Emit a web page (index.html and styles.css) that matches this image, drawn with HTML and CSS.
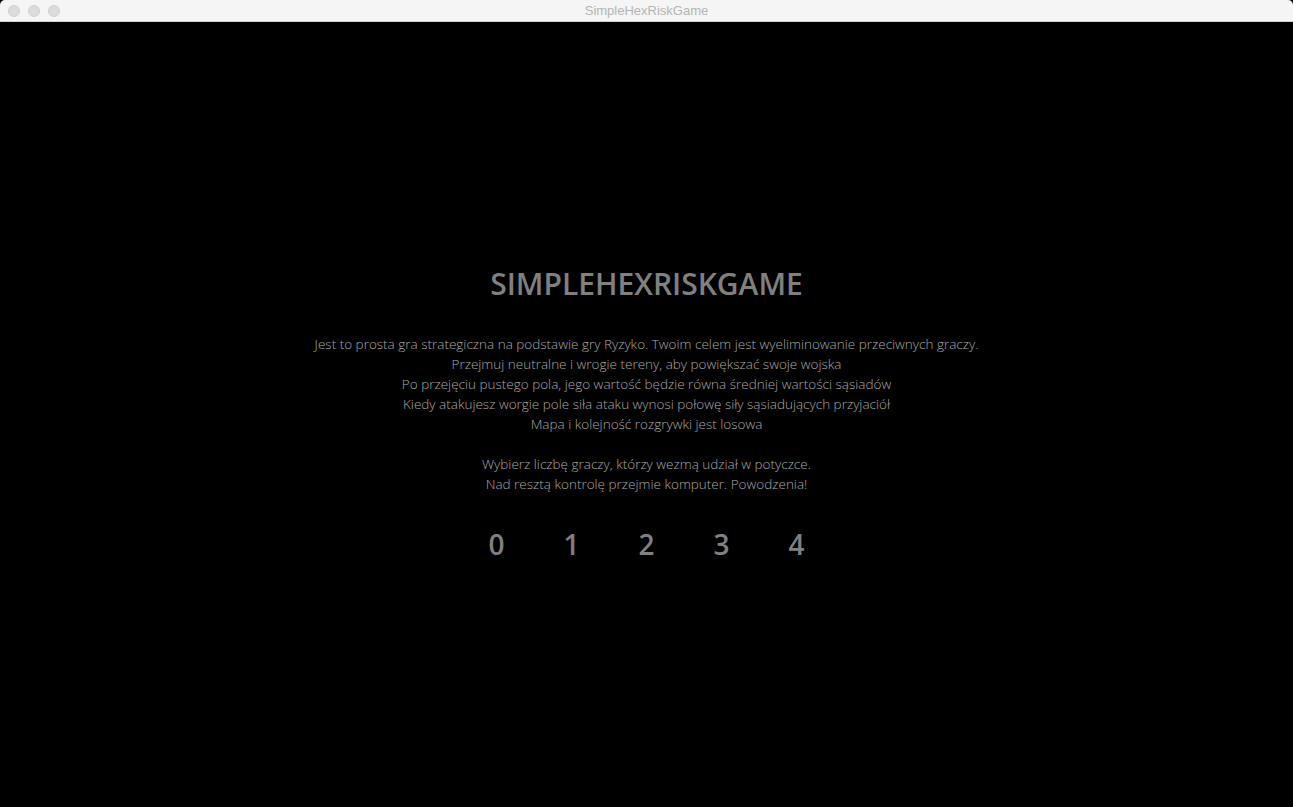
FILE: index.html
```html
<!DOCTYPE html>
<html lang="pl">
<head>
<meta charset="utf-8">
<title>SimpleHexRiskGame</title>
<link rel="stylesheet" href="styles.css">
</head>
<body>
<div class="window">
  <header class="titlebar">
    <div class="lights">
      <span class="light"></span>
      <span class="light"></span>
      <span class="light"></span>
    </div>
    <div class="wtitle">SimpleHexRiskGame</div>
  </header>
  <main class="screen">
    <h1 class="title">SIMPLEHEXRISKGAME</h1>
    <div class="desc">
      <p>Jest to prosta gra strategiczna na podstawie gry Ryzyko. Twoim celem jest wyeliminowanie przeciwnych graczy.</p>
      <p>Przejmuj neutralne i wrogie tereny, aby powiększać swoje wojska</p>
      <p>Po przejęciu pustego pola, jego wartość będzie równa średniej wartości sąsiadów</p>
      <p>Kiedy atakujesz worgie pole siła ataku wynosi połowę siły sąsiadujących przyjaciół</p>
      <p>Mapa i kolejność rozgrywki jest losowa</p>
      <p class="blank">&nbsp;</p>
      <p>Wybierz liczbę graczy, którzy wezmą udział w potyczce.</p>
      <p>Nad resztą kontrolę przejmie komputer. Powodzenia!</p>
    </div>
    <div class="choices">
      <span class="choice">0</span>
      <span class="choice">1</span>
      <span class="choice">2</span>
      <span class="choice">3</span>
      <span class="choice">4</span>
    </div>
  </main>
</div>
</body>
</html>
```

FILE: styles.css
```css
* { box-sizing: border-box; }
html, body { margin: 0; padding: 0; height: 100%; }
body { background: #000; }
.window {
  width: 1293px;
  height: 807px;
  display: flex;
  flex-direction: column;
  background: #000;
}
.titlebar {
  height: 22px;
  flex: 0 0 22px;
  background: #f5f5f5;
  border-bottom: 1px solid #d1d1d1;
  border-radius: 5px 5px 0 0;
  display: flex;
  align-items: center;
  position: relative;
}
.lights {
  display: flex;
  gap: 8px;
  padding-left: 8px;
  position: relative;
  z-index: 1;
}
.light {
  width: 12px;
  height: 12px;
  border-radius: 50%;
  background: #dcdcdc;
  border: 1px solid #d0d0d0;
}
.wtitle {
  position: absolute;
  left: 0;
  right: 0;
  top: 0;
  height: 21px;
  line-height: 22px;
  text-align: center;
  font-family: "Liberation Sans", Arial, sans-serif;
  font-size: 13px;
  color: #b4b4b4;
}
.screen {
  flex: 1;
  display: flex;
  flex-direction: column;
  align-items: center;
  padding-top: 245px;
  font-family: "Open Sans", "Noto Sans", sans-serif;
}
.title {
  margin: 0;
  font-size: 30px;
  font-weight: 600;
  color: #808080;
  line-height: 34px;
}
.desc {
  margin-top: 33px;
  text-align: center;
  color: #a8a8a8;
  font-size: 13.5px;
  font-weight: 300;
}
.desc p {
  margin: 0;
  line-height: 20px;
}
.choices {
  margin-top: 33px;
  display: flex;
}
.choice {
  width: 75px;
  text-align: center;
  font-size: 28px;
  font-weight: 600;
  color: #808080;
  line-height: 34px;
}
```
